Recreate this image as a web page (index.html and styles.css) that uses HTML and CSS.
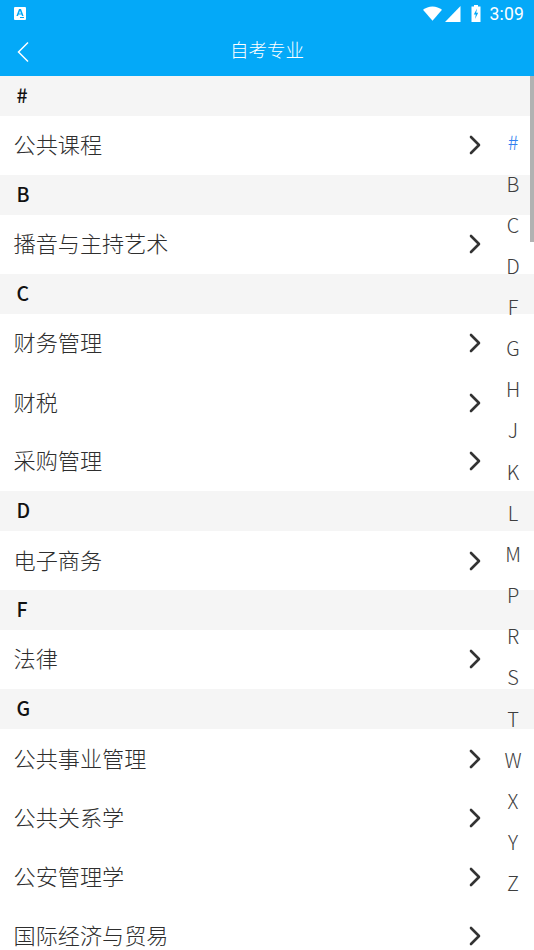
FILE: index.html
```html
<!DOCTYPE html>
<html lang="zh-CN">
<head>
<meta charset="utf-8">
<title>自考专业</title>
<link rel="stylesheet" href="styles.css">
</head>
<body>
<div class="app">
  <header class="top">
    <div class="status">
      <svg class="notif" width="12" height="13" viewBox="0 0 12 13"><path fill="#fff" d="M0 1a1 1 0 0 1 1-1h10a1 1 0 0 1 1 1v11a1 1 0 0 1-1 1H1a1 1 0 0 1-1-1z"/><path fill="#03a9f7" d="M5 2h2l2.600 7H8l-.5-1.500h-3L4 9H2.400zM5 6.500h2L6 3.700z"/><path fill="#03a9f7" d="M6 10h4v1H6z"/></svg>
      <div class="status-right">
        <svg class="wifi" width="19" height="15" viewBox="0 0 20 15"><path fill="#fff" d="M0 3.500C2.700 1.300 6.200 0 10 0s7.300 1.300 10 3.500L10 15z"/></svg>
        <svg class="signal" width="16" height="16" viewBox="0 0 16 16"><path fill="#fff" d="M0 16 15.500 0v16z"/></svg>
        <svg class="battery" width="10" height="17" viewBox="0 0 10 17"><path fill="#fff" d="M3 0h4v1.500h2.500V17H.500V1.500H3z"/><path fill="#03a9f7" d="M6 3.500 2.800 9.500h2l-.8 4.500 3.200-6.200h-2z"/></svg>
        <span class="clock">3:09</span>
      </div>
    </div>
    <div class="nav">
      <svg class="back" width="14" height="22" viewBox="0 0 14 22"><path fill="none" stroke="#fff" stroke-width="1.500" d="M12 1.500 2.500 11l9.500 9.500"/></svg>
      <h1 class="title">自考专业</h1>
    </div>
  </header>

  <main class="list">
    <div class="sec">#</div>
    <div class="row"><span>公共课程</span><svg class="chev" viewBox="0 0 12 20"><path d="M2 2l8 8-8 8"/></svg></div>
    <div class="sec">B</div>
    <div class="row"><span>播音与主持艺术</span><svg class="chev" viewBox="0 0 12 20"><path d="M2 2l8 8-8 8"/></svg></div>
    <div class="sec">C</div>
    <div class="row"><span>财务管理</span><svg class="chev" viewBox="0 0 12 20"><path d="M2 2l8 8-8 8"/></svg></div>
    <div class="row shift"><span>财税</span><svg class="chev" viewBox="0 0 12 20"><path d="M2 2l8 8-8 8"/></svg></div>
    <div class="row"><span>采购管理</span><svg class="chev" viewBox="0 0 12 20"><path d="M2 2l8 8-8 8"/></svg></div>
    <div class="sec">D</div>
    <div class="row shift"><span>电子商务</span><svg class="chev" viewBox="0 0 12 20"><path d="M2 2l8 8-8 8"/></svg></div>
    <div class="sec">F</div>
    <div class="row"><span>法律</span><svg class="chev" viewBox="0 0 12 20"><path d="M2 2l8 8-8 8"/></svg></div>
    <div class="sec">G</div>
    <div class="row shift"><span>公共事业管理</span><svg class="chev" viewBox="0 0 12 20"><path d="M2 2l8 8-8 8"/></svg></div>
    <div class="row shift"><span>公共关系学</span><svg class="chev" viewBox="0 0 12 20"><path d="M2 2l8 8-8 8"/></svg></div>
    <div class="row shift"><span>公安管理学</span><svg class="chev" viewBox="0 0 12 20"><path d="M2 2l8 8-8 8"/></svg></div>
    <div class="row shift"><span>国际经济与贸易</span><svg class="chev" viewBox="0 0 12 20"><path d="M2 2l8 8-8 8"/></svg></div>
  </main>

  <nav class="index">
    <span class="on">#</span><span>B</span><span>C</span><span>D</span><span>F</span><span>G</span><span>H</span><span>J</span><span>K</span><span>L</span><span>M</span><span>P</span><span>R</span><span>S</span><span>T</span><span>W</span><span>X</span><span>Y</span><span>Z</span>
  </nav>
  <div class="scrollbar"></div>
</div>
</body>
</html>
```
FILE: styles.css
```css
* { box-sizing: border-box; }
html, body { margin: 0; padding: 0; }
body {
  width: 534px;
  height: 950px;
  overflow: hidden;
  background: #fff;
  font-family: "Noto Sans CJK SC", "Noto Sans", sans-serif;
}
.app { position: relative; width: 534px; height: 950px; overflow: hidden; }
.top { background: #04a9f8; height: 76px; color: #fff; }
.status {
  height: 26px;
  display: flex;
  justify-content: space-between;
  align-items: center;
  padding: 1px 10px 0 14px;
}
.notif { display: block; }
.status-right { display: flex; align-items: center; }
.wifi { margin-right: 3px; }
.signal { margin-right: 10px; }
.battery { margin-right: 8px; }
.clock { font: 400 17.500px/20px Roboto, sans-serif; letter-spacing: 0.2px; }
.nav { height: 50px; display: flex; align-items: center; justify-content: center; position: relative; }
.back { position: absolute; left: 16px; top: 15px; }
.title { margin: 0 0 4px; font-weight: 300; font-size: 18.500px; line-height: 46px; }
.sec {
  height: 40px;
  background: #f5f5f5;
  padding-left: 16.500px;
  font: 500 19.500px/38px "Noto Sans CJK SC", "Noto Sans", sans-serif;
  color: #111;
}
.row {
  height: 59px;
  display: flex;
  align-items: center;
  justify-content: space-between;
  padding: 0 53px 1px 13.500px;
  background: #fff;
  font-weight: 300;
  font-size: 22.150px;
  color: #2e2e2e;
}
.row.shift { padding-bottom: 0; padding-top: 1px; }
.row span { margin-bottom: 4px; }
.chev { width: 12px; height: 20px; flex: none; }
.chev path { fill: none; stroke: #333; stroke-width: 2.600; stroke-linecap: round; stroke-linejoin: round; }
.index {
  position: absolute;
  top: 121.400px;
  right: 0;
  width: 42px;
  display: flex;
  flex-direction: column;
  align-items: center;
  color: #3c3c3c;
  font: 300 20px/41.170px "Noto Sans CJK SC", sans-serif;
  opacity: 0.99;
}
.index span { display: block; height: 41.170px; }
.index .on { color: #2f7ff0; }
.scrollbar {
  position: absolute;
  top: 76px;
  right: 0;
  width: 4px;
  height: 166px;
  background: #b2b2b2;
}
```
